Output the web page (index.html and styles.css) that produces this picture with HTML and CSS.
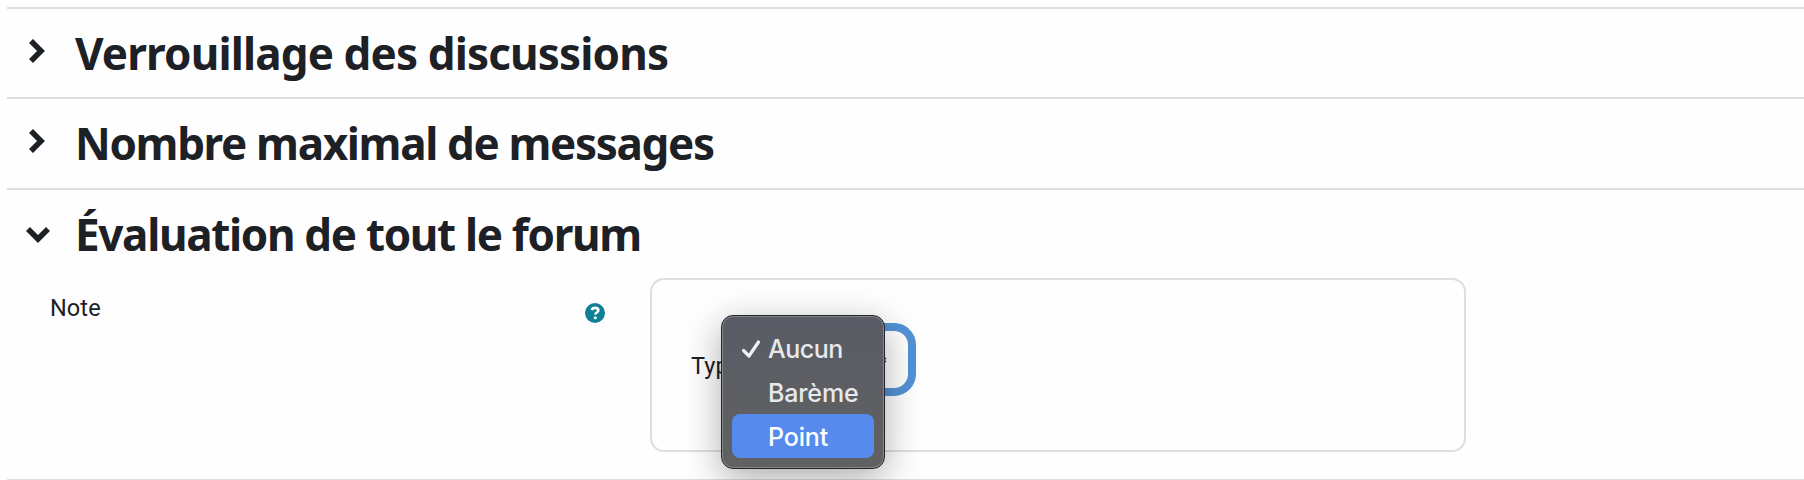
FILE: index.html
```html
<!DOCTYPE html>
<html lang="fr">
<head>
<meta charset="utf-8">
<title>Forum</title>
<link rel="stylesheet" href="styles.css">
</head>
<body>
<main class="form">
  <section class="section">
    <header class="section-head">
      <svg class="chevron" viewBox="0 0 26 26"><path d="M6 3 16 13 6 23"/></svg>
      <h3 class="title title-lock">Verrouillage des discussions</h3>
    </header>
  </section>
  <section class="section section-second">
    <header class="section-head">
      <svg class="chevron" viewBox="0 0 26 26"><path d="M6 3 16 13 6 23"/></svg>
      <h3 class="title title-max">Nombre maximal de messages</h3>
    </header>
  </section>
  <section class="section section-open">
    <header class="section-head">
      <svg class="chevron chevron-down" viewBox="0 0 26 26"><path d="M3 8 13 18 23 8"/></svg>
      <h3 class="title title-grade">Évaluation de tout le forum</h3>
    </header>
    <div class="row">
      <div class="row-label">
        <span class="label">Note</span>
        <svg class="help" viewBox="0 0 20 20"><circle cx="10" cy="10" r="10"/><path d="M6.7 7.2C7.2 5.4 8.5 4.8 10.1 4.8c1.9 0 3.2 1 3.2 2.5 0 2.2-2.9 2.2-2.9 4.2"/><rect x="8.8" y="13.4" width="3" height="2.8" rx="1.2"/></svg>
      </div>
      <div class="panel">
        <span class="label">Type</span>
        <div class="select">
          <svg class="arrows" viewBox="0 0 10 14"><path d="M5 1 8.500 6H1.500ZM1.500 8H8.500L5 13Z"/></svg>
          <ul class="menu">
            <li class="option"><svg class="check" viewBox="0 0 20 20"><path d="M2.500 11.500 8 17 17.500 3"/></svg>Aucun</li>
            <li class="option option-bareme">Barème</li>
            <li class="option option-active">Point</li>
          </ul>
        </div>
      </div>
    </div>
  </section>
  <div class="divider"></div>
</main>
</body>
</html>
```
FILE: styles.css
```css
* { box-sizing: border-box; }
body { margin: 0; background: #fefefe; color: #1d2125; overflow: hidden; }
.form { height: 480px; padding: 7px 0 0 7px; font-family: Roboto, sans-serif; }
.section { height: 90px; border-top: 2px solid #dedede; }
.section-second { height: 91px; }
.section-open { height: 291px; }
.section-head { display: flex; align-items: center; height: 88px; padding-left: 18px; }
.chevron { width: 26px; height: 26px; margin: 0 24px 5px 0; fill: none; stroke: #1d2125; stroke-width: 5.6; }
.chevron-down { margin-bottom: 0; }
.title { margin: 0; font: 700 44px/60px "Noto Sans", sans-serif; white-space: nowrap; }
.title-lock { letter-spacing: -0.86px; }
.title-max { letter-spacing: -1.34px; }
.title-grade { letter-spacing: -1.33px; }
.row { display: flex; padding-left: 43px; }
.row-label { display: flex; justify-content: space-between; width: 555px; padding: 16px 0 0; }
.label { font-size: 23.5px; line-height: 28px; letter-spacing: 0.1px; font-weight: 400; }
.help { width: 20px; height: 20px; margin: 9px 0 0; fill: #0f8196; }
.help path { fill: none; stroke: #fff; stroke-width: 2.7; }
.help rect { fill: #fff; }
.panel { display: flex; width: 816px; height: 174px; margin-left: 45px; padding: 43px 39px 0; border: 2px solid #dedede; border-radius: 14px; }
.panel .label { width: 47px; padding-top: 29px; }
.select { position: relative; display: flex; align-items: center; justify-content: flex-end; width: 171px; height: 73px; margin-left: 7px; padding-right: 20px; border: 8px solid #5292d6; border-radius: 22px; background: #fff; }
.arrows { width: 9px; height: 12px; fill: #1d2125; }
.menu { position: absolute; left: -32px; top: -16px; width: 164px; height: 154px; margin: 0; padding: 10px; list-style: none; border: 1px solid #222427; border-radius: 12px; background: linear-gradient(#595c65, #606162); box-shadow: inset 0 0 0 1px #858789, 0 10px 36px rgba(0,0,0,.32); }
.option { position: relative; height: 44px; padding-left: 36px; border-radius: 8px; color: #e8e9eb; font: 500 25px/46px Inter, sans-serif; letter-spacing: -0.5px; }
.option-bareme, .option-active { letter-spacing: -0.15px; }
.option-active { color: #fff; background: #568bed; }
.check { position: absolute; left: 9px; top: 13px; width: 20px; height: 20px; fill: none; stroke: #f0f1f2; stroke-width: 3.2; stroke-linecap: round; stroke-linejoin: round; }
.divider { height: 1px; background: #dedede; }
```
